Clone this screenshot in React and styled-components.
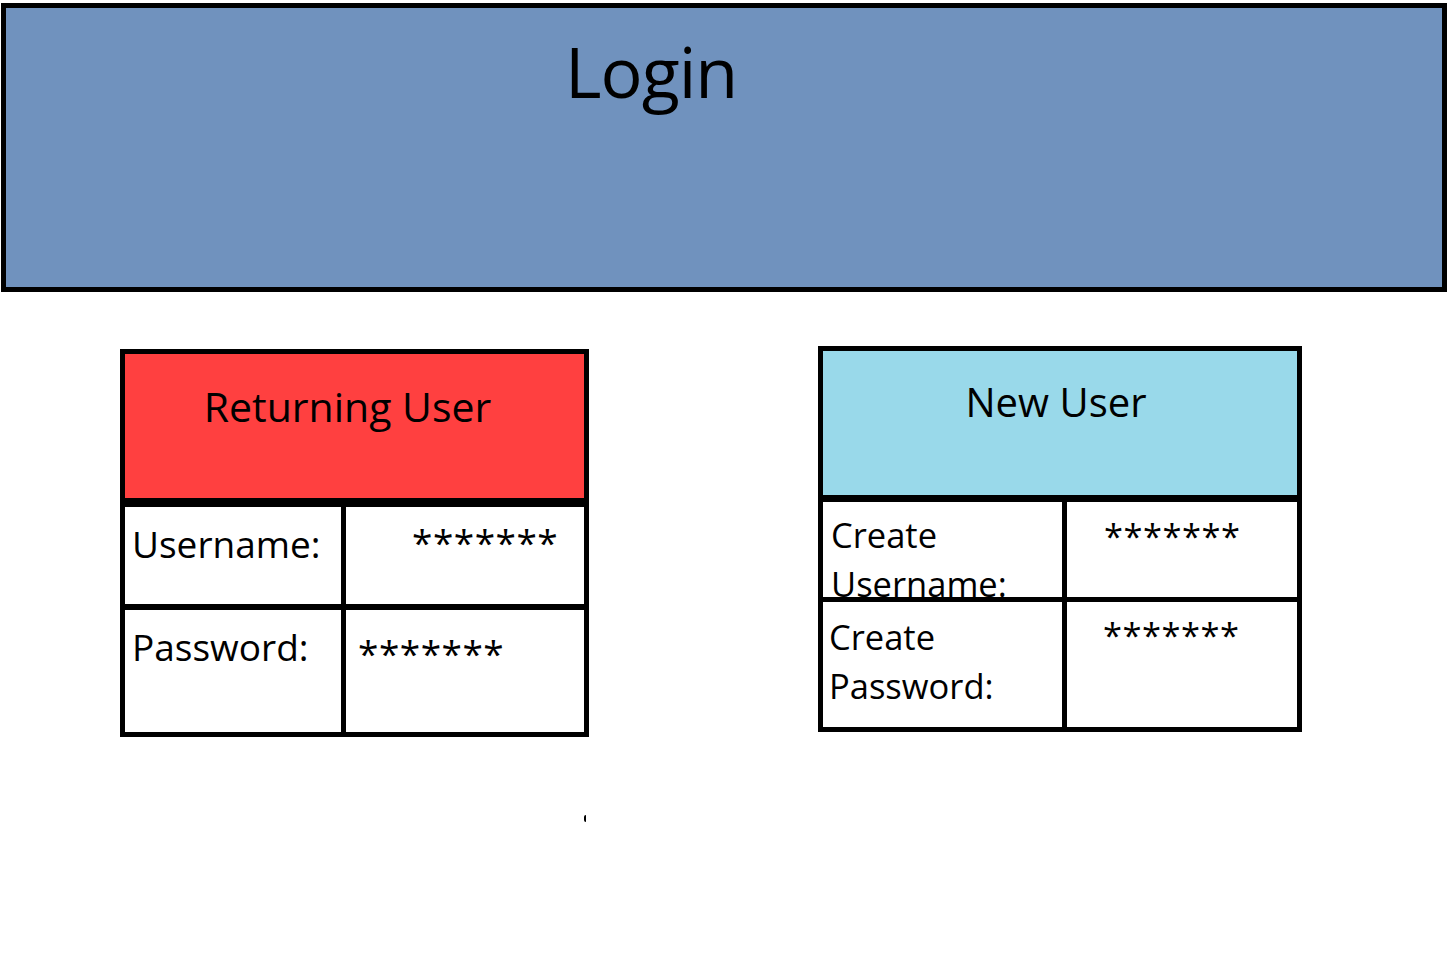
import React from "react";
import styled, { createGlobalStyle } from "styled-components";

const GlobalStyle = createGlobalStyle`
  html, body {
    margin: 0;
    padding: 0;
    background: #fff;
  }
  body {
    font-family: "Open Sans", "Noto Sans", sans-serif;
    color: #000;
  }
`;

const Page = styled.div`
  position: relative;
  width: 1448px;
  height: 960px;
  padding: 3px 1px 0 1px;
  box-sizing: border-box;
`;

const Banner = styled.header`
  height: 289px;
  border: 5px solid #000;
  background: #7092be;
  box-sizing: border-box;
  padding: 28px 0 0 559px;
`;

const Title = styled.h1`
  margin: 0;
  font-size: 70px;
  font-weight: 400;
  line-height: 1;
  letter-spacing: -1px;
`;

const Cards = styled.div`
  display: flex;
  align-items: flex-start;
  gap: 229px;
  margin-top: 54px;
  padding-left: 119px;
`;

const Card = styled.section`
  width: ${(p) => p.$width}px;
  margin-top: ${(p) => p.$offset || 0}px;
  border: 5px solid #000;
  box-sizing: border-box;
  background: #fff;
`;

const CardHeader = styled.div`
  height: ${(p) => p.$height}px;
  background: ${(p) => p.$bg};
  border-bottom: ${(p) => p.$line}px solid #000;
  box-sizing: border-box;
  padding: ${(p) => p.$pt}px ${(p) => p.$shift}px 0 0;
  text-align: center;
  font-size: ${(p) => p.$size}px;
  line-height: 1.362;
`;

const Row = styled.div`
  display: grid;
  grid-template-columns: ${(p) => p.$labelWidth}px 1fr;
  height: ${(p) => p.$height}px;
  border-bottom: ${(p) => p.$line || 0}px solid #000;
  box-sizing: border-box;
`;

const Label = styled.div`
  border-right: 5px solid #000;
  padding: ${(p) => p.$pt}px 0 0 ${(p) => p.$pl}px;
  font-size: ${(p) => p.$size}px;
  line-height: ${(p) => p.$lh}px;
  white-space: pre-line;
  overflow: visible;
`;

const Value = styled.div`
  padding: ${(p) => p.$pt}px 0 0 ${(p) => p.$pl}px;
  font-size: ${(p) => p.$size}px;
  line-height: 1;
  letter-spacing: 0.5px;
`;

const Stray = styled.span`
  position: absolute;
  left: 584px;
  top: 815px;
  width: 2px;
  height: 7px;
  border-left: 2px solid #000;
  border-radius: 2px 0 0 2px;
  box-sizing: border-box;
`;

const App = () => {
  return (
    <Page>
      <GlobalStyle />
      <Banner>
        <Title>Login</Title>
      </Banner>
      <Cards>
        <Card $width={469} $offset={3}>
          <CardHeader $height={153} $line={9} $bg="#ff4040" $pt={25} $shift={14} $size={41}>
            Returning User
          </CardHeader>
          <Row $labelWidth={221} $height={103} $line={6}>
            <Label $pt={12} $pl={7} $size={37} $lh={50}>Username:</Label>
            <Value $pt={16} $pl={66} $size={37}>*******</Value>
          </Row>
          <Row $labelWidth={221} $height={122}>
            <Label $pt={12} $pl={7} $size={37} $lh={50}>Password:</Label>
            <Value $pt={24} $pl={12} $size={37}>*******</Value>
          </Row>
        </Card>
        <Card $width={484}>
          <CardHeader $height={151} $line={7} $bg="#99d9ea" $pt={24} $shift={8} $size={40}>
            New User
          </CardHeader>
          <Row $labelWidth={244} $height={100} $line={5}>
            <Label $pt={8} $pl={8} $size={34.5} $lh={49}>{"Create\nUsername:"}</Label>
            <Value $pt={17} $pl={37} $size={34.5}>*******</Value>
          </Row>
          <Row $labelWidth={244} $height={125}>
            <Label $pt={10} $pl={6} $size={34.5} $lh={49}>{"Create\nPassword:"}</Label>
            <Value $pt={16} $pl={36} $size={34.5}>*******</Value>
          </Row>
        </Card>
      </Cards>
      <Stray />
    </Page>
  );
};

export default App;
